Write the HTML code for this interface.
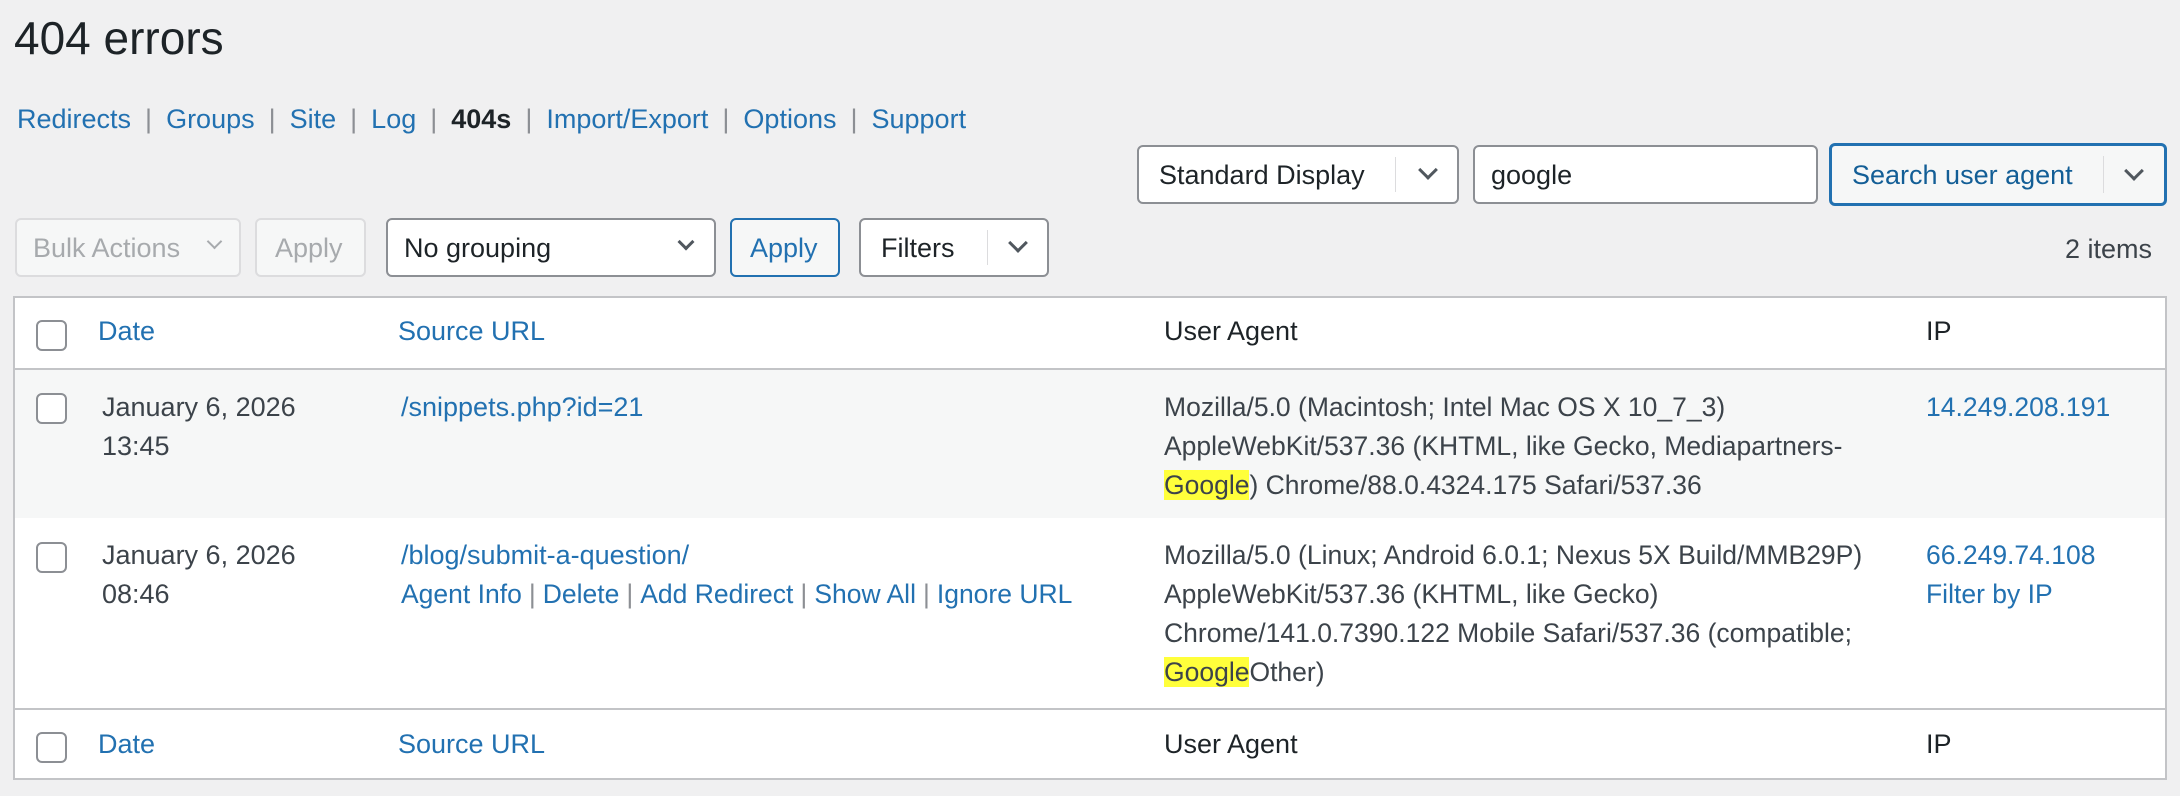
<!DOCTYPE html>
<html><head><meta charset="utf-8"><style>
*{box-sizing:border-box;margin:0;padding:0}
body{width:2180px;height:796px;background:#f0f0f1;font-family:"Liberation Sans",Arial,sans-serif;color:#1d2327;position:relative;overflow:hidden;font-size:27px}
.a{position:absolute;white-space:nowrap}
a,.l{color:#2271b1;text-decoration:none}
.box{position:absolute;background:#fff;border:2px solid #8c8f94;border-radius:6px}
.dv{position:absolute;top:10px;bottom:10px;width:1px;background:#dcdcde}
.chev{position:absolute;width:14px;height:14px;border-right:3px solid #50575e;border-bottom:3px solid #50575e;transform:rotate(45deg)}
.cb{position:absolute;width:31px;height:31px;border:2px solid #8c8f94;border-radius:6px;background:#fff}
.sep{color:#8c8f94;margin:0 11px}
.hl{background:#ffff3b}
.t{line-height:39px;color:#3c434a}
</style></head><body>
<div class="a" style="left:14px;top:12px;font-size:46px;line-height:52px">404 errors</div>
<div class="a" style="left:17px;top:104px;line-height:30px;font-size:27px"><span class="l">Redirects</span><span class="sep" style="margin:0 14px">|</span><span class="l">Groups</span><span class="sep" style="margin:0 14px">|</span><span class="l">Site</span><span class="sep" style="margin:0 14px">|</span><span class="l">Log</span><span class="sep" style="margin:0 14px">|</span><b>404s</b><span class="sep" style="margin:0 14px">|</span><span class="l">Import/Export</span><span class="sep" style="margin:0 14px">|</span><span class="l">Options</span><span class="sep" style="margin:0 14px">|</span><span class="l">Support</span></div>

<div class="box" style="left:1137px;top:145px;width:322px;height:59px"><div class="a" style="left:20px;top:13px">Standard Display</div><div class="dv" style="left:256px"></div><div class="chev" style="left:282px;top:16px"></div></div>
<div class="box" style="left:1473px;top:145px;width:345px;height:59px"><div class="a" style="left:16px;top:13px">google</div></div>
<div class="box" style="left:1829px;top:143px;width:338px;height:63px;border:3px solid #2271b1;background:#f6f7f7"><div class="a" style="left:20px;top:14px;color:#135e96">Search user agent</div><div class="dv" style="left:271px"></div><div class="chev" style="left:295px;top:18px"></div></div>

<div class="box" style="left:15px;top:218px;width:226px;height:59px;border-color:#dcdcde;background:#f6f7f7"><div class="a" style="left:16px;top:13px;color:#a7aaad">Bulk Actions</div><div class="chev" style="left:192px;top:16px;width:11px;height:11px;border-color:#a7aaad;border-width:2px"></div></div>
<div class="box" style="left:255px;top:218px;width:111px;height:59px;border-color:#dcdcde;background:#f6f7f7"><div class="a" style="left:18px;top:13px;color:#a7aaad">Apply</div></div>
<div class="box" style="left:386px;top:218px;width:330px;height:59px"><div class="a" style="left:16px;top:13px">No grouping</div><div class="chev" style="left:292px;top:16px;width:12px;height:12px"></div></div>
<div class="box" style="left:730px;top:218px;width:110px;height:59px;border-color:#2271b1;background:#f6f7f7"><div class="a" style="left:18px;top:13px;color:#2271b1">Apply</div></div>
<div class="box" style="left:859px;top:218px;width:190px;height:59px"><div class="a" style="left:20px;top:13px">Filters</div><div class="dv" style="left:126px"></div><div class="chev" style="left:150px;top:16px"></div></div>
<div class="a" style="right:28px;top:234px;color:#3c434a">2 items</div>

<div class="a" style="left:13px;top:296px;width:2154px;height:484px;background:#fff;border:2px solid #c3c4c7"></div>
<div class="a" style="left:15px;top:368px;width:2150px;height:2px;background:#c3c4c7"></div>
<div class="a" style="left:15px;top:370px;width:2150px;height:148px;background:#f6f7f7"></div>
<div class="a" style="left:15px;top:708px;width:2150px;height:2px;background:#c3c4c7"></div>

<div class="cb" style="left:36px;top:320px"></div>
<div class="a l" style="left:98px;top:316px">Date</div>
<div class="a l" style="left:398px;top:316px">Source URL</div>
<div class="a" style="left:1164px;top:316px">User Agent</div>
<div class="a" style="left:1926px;top:316px">IP</div>

<div class="cb" style="left:36px;top:393px"></div>
<div class="a t" style="left:102px;top:388px">January 6, 2026<br>13:45</div>
<div class="a t l" style="left:401px;top:388px;color:#2271b1">/snippets.php?id=21</div>
<div class="a t" style="left:1164px;top:388px;font-size:26.5px">Mozilla/5.0 (Macintosh; Intel Mac OS X 10_7_3)<br>AppleWebKit/537.36 (KHTML, like Gecko, Mediapartners-<br><span class="hl">Google</span>) Chrome/88.0.4324.175 Safari/537.36</div>
<div class="a t" style="left:1926px;top:388px;color:#2271b1;font-size:26.5px">14.249.208.191</div>

<div class="cb" style="left:36px;top:542px"></div>
<div class="a t" style="left:102px;top:536px">January 6, 2026<br>08:46</div>
<div class="a t" style="left:401px;top:536px;color:#2271b1">/blog/submit-a-question/<br><span style="font-size:26.5px">Agent Info<span class="sep" style="margin:0 7px">|</span>Delete<span class="sep" style="margin:0 7px">|</span>Add Redirect<span class="sep" style="margin:0 7px">|</span>Show All<span class="sep" style="margin:0 7px">|</span>Ignore URL</span></div>
<div class="a t" style="left:1164px;top:536px;font-size:26.5px">Mozilla/5.0 (Linux; Android 6.0.1; Nexus 5X Build/MMB29P)<br>AppleWebKit/537.36 (KHTML, like Gecko)<br>Chrome/141.0.7390.122 Mobile Safari/537.36 (compatible;<br><span class="hl">Google</span>Other)</div>
<div class="a t" style="left:1926px;top:536px;color:#2271b1;font-size:26.5px">66.249.74.108<br>Filter by IP</div>

<div class="cb" style="left:36px;top:732px"></div>
<div class="a l" style="left:98px;top:729px">Date</div>
<div class="a l" style="left:398px;top:729px">Source URL</div>
<div class="a" style="left:1164px;top:729px">User Agent</div>
<div class="a" style="left:1926px;top:729px">IP</div>
</body></html>
